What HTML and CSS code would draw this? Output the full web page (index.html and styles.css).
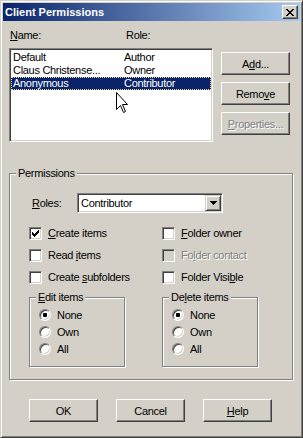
FILE: index.html
```html
<!DOCTYPE html>
<html lang="en">
<head>
    <meta charset="UTF-8">
    <title>Client Permissions</title>
    <link rel="stylesheet" href="styles.css">
</head>
<body>
    <div class="window">
        <div class="titlebar">
            <span class="title">Client Permissions</span>
            <span class="close">
                <svg width="8" height="7" viewBox="0 0 8 7" shape-rendering="crispEdges"><path d="M0 0h2v1H0zM6 0h2v1H6zM1 1h2v1H1zM5 1h2v1H5zM2 2h4v1H2zM3 3h2v1H3zM2 4h4v1H2zM1 5h2v1H1zM5 5h2v1H5zM0 6h2v1H0zM6 6h2v1H6z" fill="#000"/></svg>
            </span>
        </div>

        <div class="content">
            <div class="top">
                <div class="users">
                    <div class="cols">
                        <span class="col-name"><u>N</u>ame:</span>
                        <span>Role:</span>
                    </div>
                    <div class="list">
                        <div class="row"><span class="c1">Default</span><span>Author</span></div>
                        <div class="row"><span class="c1">Claus Christense...</span><span>Owner</span></div>
                        <div class="row sel"><span class="c1">Anonymous</span><span>Contributor</span></div>
                    </div>
                </div>
                <div class="side">
                    <div class="btn">A<u>d</u>d...</div>
                    <div class="btn">Remo<u>v</u>e</div>
                    <div class="btn disabled"><u>P</u>roperties...</div>
                </div>
            </div>

            <div class="group perms">
                <div class="legend">Permissions</div>
                <div class="perms-body">
                    <div class="roles">
                        <span class="roles-label"><u>R</u>oles:</span>
                        <div class="combo">
                            <span class="combo-text">Contributor</span>
                            <span class="combo-btn">
                                <svg width="7" height="4" viewBox="0 0 7 4" shape-rendering="crispEdges"><path d="M0 0h7v1H0zM1 1h5v1H1zM2 2h3v1H2zM3 3h1v1H3z" fill="#000"/></svg>
                            </span>
                        </div>
                    </div>

                    <div class="checks">
                        <div class="check">
                            <span class="box">
                                <svg width="7" height="7" viewBox="0 0 7 7" shape-rendering="crispEdges"><path d="M6 0h1v1H6zM5 1h2v1H5zM0 2h1v1H0zM4 2h3v1H4zM0 3h2v1H0zM3 3h3v1H3zM0 4h5v1H0zM1 5h3v1H1zM2 6h1v1H2z" fill="#000"/></svg>
                            </span>
                            <span><u>C</u>reate items</span>
                        </div>
                        <div class="check">
                            <span class="box"></span>
                            <span><u>F</u>older owner</span>
                        </div>
                        <div class="check">
                            <span class="box"></span>
                            <span>Read <u>i</u>tems</span>
                        </div>
                        <div class="check disabled">
                            <span class="box"></span>
                            <span>Fo<u>l</u>der contact</span>
                        </div>
                        <div class="check">
                            <span class="box"></span>
                            <span>Create <u>s</u>ubfolders</span>
                        </div>
                        <div class="check">
                            <span class="box"></span>
                            <span>Folder Visi<u>b</u>le</span>
                        </div>
                    </div>

                    <div class="subs">
                        <div class="group sub">
                            <div class="legend"><u>E</u>dit items</div>
                            <div class="sub-body">
                                <div class="radio"><span class="dot on"></span>None</div>
                                <div class="radio"><span class="dot"></span>Own</div>
                                <div class="radio"><span class="dot"></span>All</div>
                            </div>
                        </div>
                        <div class="group sub">
                            <div class="legend">De<u>l</u>ete items</div>
                            <div class="sub-body">
                                <div class="radio"><span class="dot on"></span>None</div>
                                <div class="radio"><span class="dot"></span>Own</div>
                                <div class="radio"><span class="dot"></span>All</div>
                            </div>
                        </div>
                    </div>
                </div>
            </div>

            <div class="footer">
                <div class="btn">OK</div>
                <div class="btn">Cancel</div>
                <div class="btn"><u>H</u>elp</div>
            </div>
        </div>

        <svg class="cursor" width="12" height="21" viewBox="0 0 12 21"><path d="M0.5 0.5V17.5L4.5 13.5L7.5 20.5L9.5 19.5L6.5 12.5H11.5Z" fill="#fff" stroke="#000"/></svg>
    </div>
</body>
</html>
```

FILE: styles.css
```css
body {
    margin: 0;
    background: #d4d0c8;
    font-family: "Liberation Sans", Arial, sans-serif;
    font-size: 11px;
    letter-spacing: -0.3px;
    color: #000;
}

u {
    text-underline-offset: 1px;
}

.window {
    position: relative;
    width: 303px;
    height: 438px;
    box-sizing: border-box;
    background: #d4d0c8;
    border: 1px solid;
    border-color: #d4d0c8 #404040 #404040 #d4d0c8;
    box-shadow: inset 1px 1px 0 #fff, inset -1px -1px 0 #808080;
    padding: 2px;
}

.titlebar {
    height: 18px;
    display: flex;
    align-items: center;
    justify-content: space-between;
    padding: 0 2px 0 2px;
    background: linear-gradient(90deg, #0a246a, #a6caf0);
    color: #fff;
    font-weight: bold;
    letter-spacing: 0;
}

.close {
    width: 16px;
    height: 14px;
    box-sizing: border-box;
    display: flex;
    align-items: center;
    justify-content: center;
    background: #d4d0c8;
    border: 1px solid;
    border-color: #fff #404040 #404040 #fff;
    box-shadow: inset -1px -1px 0 #808080;
}

.content {
    padding-left: 6px;
}

.top {
    display: flex;
    margin-top: 8px;
}

.users {
    width: 204px;
}

.cols {
    display: flex;
    height: 13px;
    line-height: 13px;
    padding-left: 1px;
}

.col-name {
    width: 116px;
}

.list {
    margin-top: 6px;
    height: 94px;
    box-sizing: border-box;
    background: #fff;
    border: 1px solid;
    border-color: #808080 #fff #fff #808080;
    box-shadow: inset 1px 1px 0 #404040, inset -1px -1px 0 #d4d0c8;
    padding: 2px 1px 1px 1px;
}

.row {
    display: flex;
    height: 13px;
    line-height: 13px;
    padding-left: 2px;
    white-space: nowrap;
}

.row .c1 {
    width: 111px;
}

.row.sel {
    background: #0a246a;
    color: #fff;
    outline: 1px dotted #f5db95;
    outline-offset: -1px;
}

.side {
    margin-left: 8px;
    padding-top: 23px;
    display: flex;
    flex-direction: column;
    gap: 7px;
}

.btn {
    width: 69px;
    height: 23px;
    box-sizing: border-box;
    display: flex;
    align-items: center;
    justify-content: center;
    border: 1px solid;
    border-color: #fff #404040 #404040 #fff;
    box-shadow: inset -1px -1px 0 #808080;
}

.btn.disabled,
.check.disabled {
    color: #808080;
    text-shadow: 1px 1px 0 #fff;
}

.group {
    box-sizing: border-box;
    border: 1px solid #808080;
    box-shadow: 1px 1px 0 #fff, inset 1px 1px 0 #fff;
}

.legend {
    display: table;
    margin: -7px 0 0 6px;
    padding: 0 2px;
    line-height: 13px;
    background: #d4d0c8;
}

.perms {
    width: 284px;
    margin-top: 31px;
}

.perms-body {
    padding: 0 0 12px 19px;
}

.roles {
    display: flex;
    align-items: center;
    margin-top: 13px;
}

.roles-label {
    width: 45px;
    margin-left: 3px;
}

.combo {
    width: 146px;
    height: 20px;
    box-sizing: border-box;
    display: flex;
    padding: 1px;
    background: #fff;
    border: 1px solid;
    border-color: #808080 #fff #fff #808080;
    box-shadow: inset 1px 1px 0 #404040, inset -1px -1px 0 #d4d0c8;
}

.combo-text {
    flex: 1;
    padding-left: 2px;
    line-height: 16px;
}

.combo-btn {
    width: 16px;
    height: 16px;
    box-sizing: border-box;
    display: flex;
    align-items: center;
    justify-content: center;
    background: #d4d0c8;
    border: 1px solid;
    border-color: #d4d0c8 #404040 #404040 #d4d0c8;
    box-shadow: inset 1px 1px 0 #fff, inset -1px -1px 0 #808080;
}

.checks {
    display: grid;
    grid-template-columns: 133px auto;
    grid-auto-rows: 22px;
    margin-top: 9px;
}

.check {
    display: flex;
    align-items: center;
    gap: 6px;
}

.box {
    width: 13px;
    height: 13px;
    box-sizing: border-box;
    padding: 2px;
    display: flex;
    align-items: center;
    justify-content: center;
    background: #fff;
    border: 1px solid;
    border-color: #808080 #fff #fff #808080;
    box-shadow: inset 1px 1px 0 #404040, inset -1px -1px 0 #d4d0c8;
    text-shadow: none;
}

.check.disabled .box {
    background: #d4d0c8;
}

.subs {
    display: flex;
    gap: 37px;
    margin-top: 9px;
}

.sub {
    width: 96px;
}

.sub-body {
    padding: 2px 0 9px 9px;
}

.radio {
    display: flex;
    align-items: center;
    gap: 6px;
    height: 17px;
}

.dot {
    width: 12px;
    height: 12px;
    box-sizing: border-box;
    display: flex;
    align-items: center;
    justify-content: center;
    border-radius: 50%;
    background: #fff;
    border: 1px solid;
    border-color: #808080 #fff #fff #808080;
    box-shadow: inset 1px 1px 0 #404040, inset -1px -1px 0 #d4d0c8;
}

.dot.on::after {
    content: "";
    width: 4px;
    height: 4px;
    border-radius: 1px;
    background: #000;
}

.footer {
    display: flex;
    gap: 18px;
    margin-top: 19px;
    padding-left: 20px;
}

.cursor {
    position: absolute;
    left: 115px;
    top: 91px;
}
```
